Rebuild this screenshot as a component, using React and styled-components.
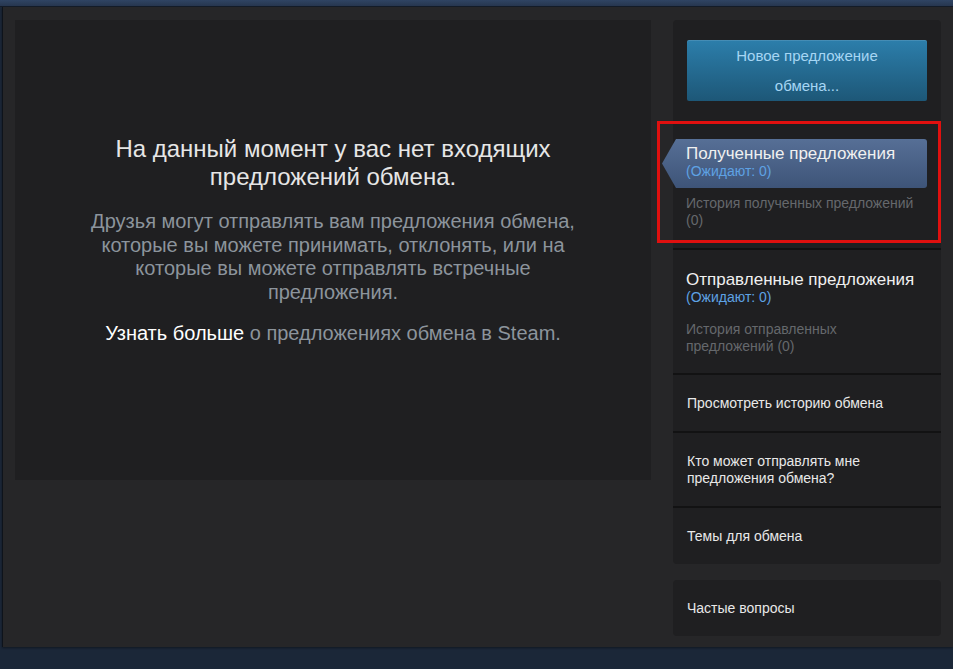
import React from 'react'
import styled, { createGlobalStyle } from 'styled-components'

const GlobalStyle = createGlobalStyle`
  * {
    margin: 0;
    padding: 0;
    box-sizing: border-box;
  }
  body {
    background: #1b2738;
    font-family: "Liberation Sans", Arial, sans-serif;
  }
`

const Page = styled.div`
  width: 100%;
  height: 100vh;
  display: flex;
  flex-direction: column;
  overflow: hidden;
`

const TopBar = styled.div`
  height: 7px;
  background: linear-gradient(to bottom, #2f4463, #26364f);
  border-bottom: 1px solid #141c29;
`

const Main = styled.div`
  height: 640px;
  margin-left: 2px;
  border-left: 1px solid #0e131b;
  background: #262628;
  display: flex;
  align-items: flex-start;
  gap: 22px;
  padding: 13px 12px 0 12px;
  box-shadow: 0 1px 2px rgba(0, 0, 0, 0.4);
`

const Content = styled.section`
  width: 636px;
  height: 460px;
  background: #1f1f21;
  padding: 114px 30px 0;
  text-align: center;
`

const Heading = styled.h2`
  font-size: 24px;
  line-height: 28px;
  font-weight: normal;
  color: #e6e6e6;
  width: 470px;
  margin: 1px auto 19px;
`

const Text = styled.p`
  font-size: 20px;
  line-height: 23.5px;
  color: #8c949c;
  width: 505px;
  margin: 0 auto 18px;
`

const Highlight = styled.span`
  color: #ffffff;
`

const Sidebar = styled.aside`
  width: 268px;
  display: flex;
  flex-direction: column;
  gap: 16px;
`

const Card = styled.div`
  background: #1f1f21;
  border-radius: 4px;
  position: relative;
`

const ButtonWrap = styled.div`
  padding: 20px 14px 0;
`

const NewOfferButton = styled.button`
  width: 240px;
  height: 61px;
  border: none;
  border-radius: 2px;
  background: linear-gradient(to bottom, #2c7eab 0%, #1d5777 100%);
  box-shadow: inset 0 1px 0 rgba(255, 255, 255, 0.12);
  color: #a6d6f4;
  font-family: inherit;
  font-size: 15px;
  line-height: 30px;
  padding: 0 36px;
`

const Section = styled.div`
  position: relative;
  padding: ${p => p.$top}px 14px ${p => p.$bottom}px 3px;
  border-bottom: 2px solid #121213;
`

const Marked = styled.div`
  position: absolute;
  left: -16px;
  top: 20px;
  right: 0;
  bottom: 5px;
  border: 3px solid #e0100f;
  pointer-events: none;
`

const Tab = styled.div`
  padding: 5px 10px 8px;
  position: relative;
  border-radius: 0 3px 3px 0;
  background: ${p => (p.$active ? 'linear-gradient(to bottom, #566f96, #3e5478)' : 'transparent')};

  ${p => p.$active && `
    &::before {
      content: '';
      position: absolute;
      left: -14px;
      top: 0;
      width: 14px;
      height: 100%;
      background: linear-gradient(to bottom, #566f96, #3e5478);
      clip-path: polygon(100% 0, 0 50%, 100% 100%);
    }
  `}
`

const TabTitle = styled.div`
  font-size: 17px;
  line-height: 19px;
  color: #f0f0f0;
`

const Pending = styled.div`
  font-size: 14px;
  line-height: 17px;
  color: #5ea2e4;
`

const History = styled.div`
  font-size: 14px;
  line-height: 17px;
  color: #65686c;
  padding: 7px 10px 0;
`

const LinkRow = styled.div`
  padding: 20px 14px 19px;
  font-size: 14px;
  line-height: 17px;
  color: #e8e8e8;
  border-bottom: ${p => (p.$last ? 'none' : '2px solid #121213')};
`

const Bottom = styled.div`
  flex: 1;
`

export default function App() {
  return (
    <Page>
      <GlobalStyle />
      <TopBar />
      <Main>
        <Content>
          <Heading>На данный момент у вас нет входящих предложений обмена.</Heading>
          <Text>
            Друзья могут отправлять вам предложения обмена, которые вы можете принимать, отклонять, или на
            которые вы можете отправлять встречные предложения.
          </Text>
          <Text>
            <Highlight>Узнать больше</Highlight> о предложениях обмена в Steam.
          </Text>
        </Content>
        <Sidebar>
          <Card>
            <ButtonWrap>
              <NewOfferButton>Новое предложение обмена...</NewOfferButton>
            </ButtonWrap>
            <Section $top={38} $bottom={19}>
              <Marked />
              <Tab $active>
                <TabTitle>Полученные предложения</TabTitle>
                <Pending>(Ожидают: 0)</Pending>
              </Tab>
              <History>История полученных предложений (0)</History>
            </Section>
            <Section $top={15} $bottom={18}>
              <Tab>
                <TabTitle>Отправленные предложения</TabTitle>
                <Pending>(Ожидают: 0)</Pending>
              </Tab>
              <History>История отправленных предложений (0)</History>
            </Section>
            <LinkRow>Просмотреть историю обмена</LinkRow>
            <LinkRow>Кто может отправлять мне предложения обмена?</LinkRow>
            <LinkRow $last>Темы для обмена</LinkRow>
          </Card>
          <Card>
            <LinkRow $last>Частые вопросы</LinkRow>
          </Card>
        </Sidebar>
      </Main>
      <Bottom />
    </Page>
  )
}
